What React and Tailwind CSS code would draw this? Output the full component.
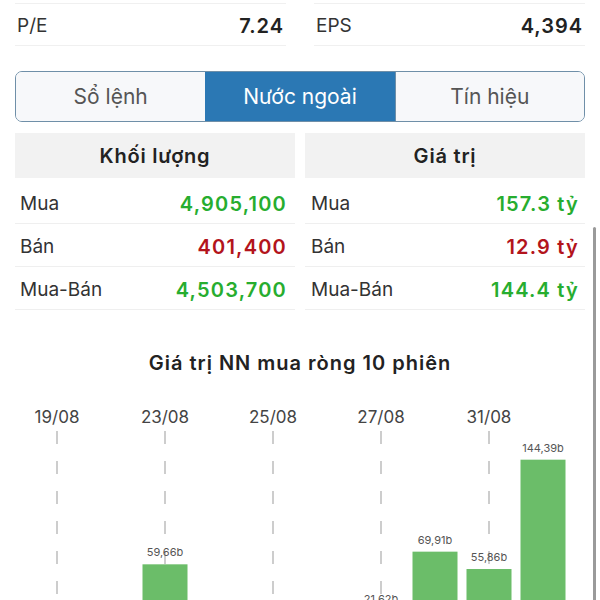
import React from 'react';

const stats = [
  { label: 'P/E', value: '7.24' },
  { label: 'EPS', value: '4,394' },
];

const tabs = ['Sổ lệnh', 'Nước ngoài', 'Tín hiệu'];

const volumeRows = [
  { label: 'Mua', value: '4,905,100', color: 'text-[#27ad2f]' },
  { label: 'Bán', value: '401,400', color: 'text-[#b3141c]' },
  { label: 'Mua-Bán', value: '4,503,700', color: 'text-[#27ad2f]' },
];

const valueRows = [
  { label: 'Mua', value: '157.3 tỷ', color: 'text-[#27ad2f]' },
  { label: 'Bán', value: '12.9 tỷ', color: 'text-[#b3141c]' },
  { label: 'Mua-Bán', value: '144.4 tỷ', color: 'text-[#27ad2f]' },
];

// 10 phiên, chỉ những cột dương lọt vào khung nhìn
const sessions = [
  { date: '19/08', value: null },
  { date: '20/08', value: null },
  { date: '23/08', value: 59.66, text: '59,66b' },
  { date: '24/08', value: null },
  { date: '25/08', value: null },
  { date: '26/08', value: null },
  { date: '27/08', value: 21.62, text: '21,62b' },
  { date: '30/08', value: 69.91, text: '69,91b' },
  { date: '31/08', value: 55.86, text: '55,86b' },
  { date: '01/09', value: 144.39, text: '144,39b' },
];

const BASE = 247;
const SCALE = 1.235;

const DataRow = ({ row, pad }) => (
  <div className={`h-[43px] pt-[4px] flex items-center justify-between border-b border-[#efefef] ${pad}`}>
    <span className="text-[#333]">{row.label}</span>
    <span className={`font-semibold tracking-[1.2px] text-[20px] ${row.color}`}>{row.value}</span>
  </div>
);

const NetBuyChart = () => (
  <svg width="600" height="260" className="block mt-[15px]">
    {sessions.map((s, i) => {
      const cx = 57 + i * 54;
      if (i % 2 !== 0) return null;
      return (
        <g key={s.date}>
          <text x={cx} y={26} textAnchor="middle" dominantBaseline="central" fontSize="17" fill="#444">
            {s.date}
          </text>
          <line x1={cx} y1={40} x2={cx} y2={260} stroke="#bdbdbd" strokeWidth="1.5" strokeDasharray="13 17" />
        </g>
      );
    })}
    {sessions.map((s, i) => {
      if (s.value == null) return null;
      const cx = 57 + i * 54;
      const h = s.value * SCALE;
      const top = BASE - h;
      return (
        <g key={s.date + 'b'}>
          <rect x={cx - 22.5} y={top} width="45" height={h} fill="#6bbd69" />
          <text x={cx} y={top - 12} textAnchor="middle" dominantBaseline="central" fontSize="11" fill="#555">
            {s.text}
          </text>
        </g>
      );
    })}
  </svg>
);

const App = () => {
  return (
    <div
      className="relative w-[600px] h-[600px] overflow-hidden bg-white text-[19px]"
      style={{ fontFamily: 'Inter, "Noto Sans", sans-serif' }}
    >
      <div className="flex gap-[28px] px-[15px] pt-[3px]">
        {stats.map((s) => (
          <div key={s.label} className="flex-1 h-[43px] pt-[3px] flex items-center justify-between border-y border-[#f0f0f0] px-[2px]">
            <span className="text-[#333]">{s.label}</span>
            <span className="font-semibold text-[20px] tracking-[1px] text-[#222]">{s.value}</span>
          </div>
        ))}
      </div>

      <div className="mx-[15px] mt-[25px] h-[51px] grid grid-cols-3 border-[1.5px] border-[#6f8fa8] rounded-[7px] overflow-hidden text-[21px]">
        {tabs.map((t, i) => (
          <div
            key={t}
            className={`flex items-center justify-center ${
              i === 1 ? 'bg-[#2b78b4] text-white' : 'bg-[#f7f8fa] text-[#555]'
            } ${i === 2 ? 'border-l-[1.5px] border-[#6f8fa8]' : ''}`}
          >
            {t}
          </div>
        ))}
      </div>

      <div className="flex gap-[10px] px-[15px] mt-[11px]">
        <div className="flex-1">
          <div className="h-[45px] bg-[#f2f2f2] flex items-center justify-center font-semibold text-[20px] tracking-[0.8px] text-[#222]">
            Khối lượng
          </div>
          <div className="mt-[3px]">
            {volumeRows.map((r) => (
              <DataRow key={r.label} row={r} pad="pl-[5px] pr-[8px]" />
            ))}
          </div>
        </div>
        <div className="flex-1">
          <div className="h-[45px] bg-[#f2f2f2] flex items-center justify-center font-semibold text-[20px] tracking-[0.8px] text-[#222]">
            Giá trị
          </div>
          <div className="mt-[3px]">
            {valueRows.map((r) => (
              <DataRow key={r.label} row={r} pad="pl-[6px] pr-[6px]" />
            ))}
          </div>
        </div>
      </div>

      <div className="mt-[40px] text-center text-[20px] leading-[26px] tracking-[1px] font-semibold text-[#222]">
        Giá trị NN mua ròng 10 phiên
      </div>

      <NetBuyChart />

      <div className="absolute right-[4px] top-[227px] w-[3px] h-[400px] rounded-full bg-[#9a9a9a]" />
    </div>
  );
};

export default App;
